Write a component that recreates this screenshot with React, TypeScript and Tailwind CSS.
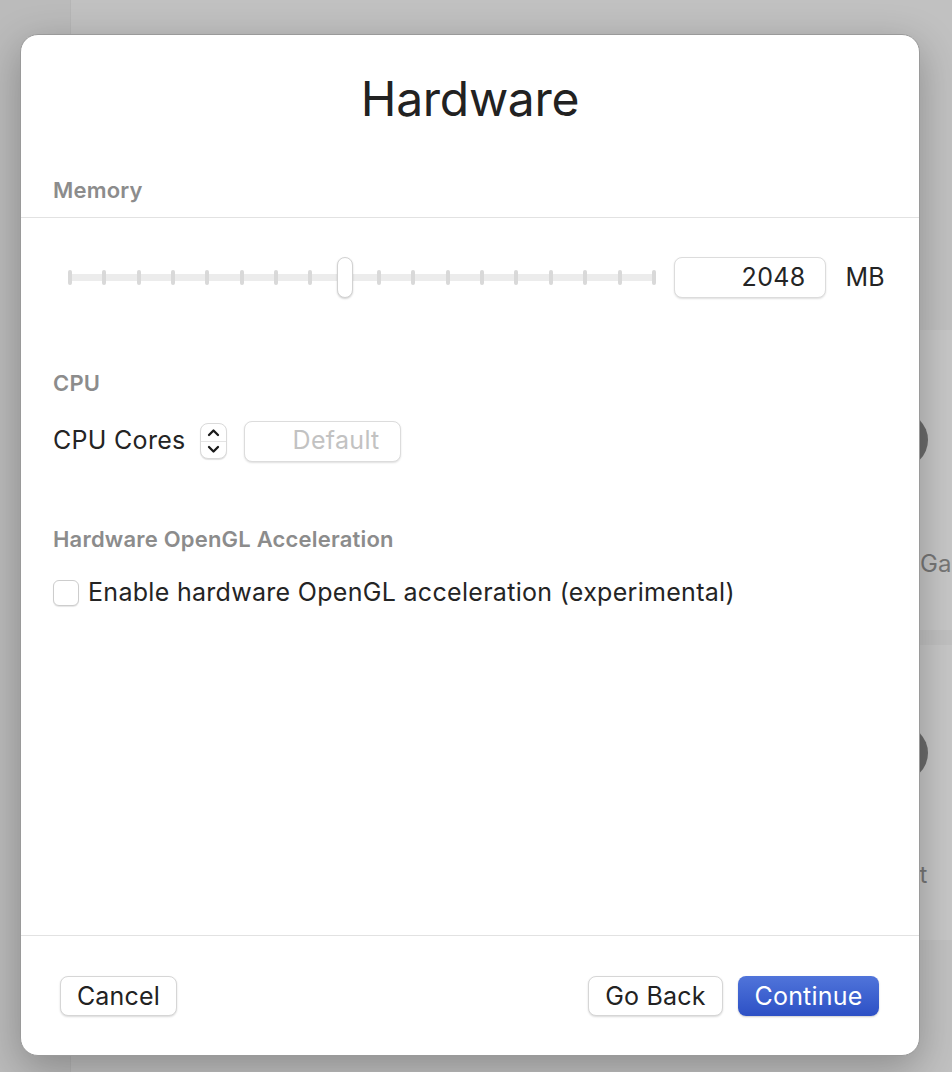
import React from 'react';

const font = { fontFamily: 'Inter, "Liberation Sans", sans-serif' };

function SectionHeader({ children, border }: { children: React.ReactNode; border?: boolean }) {
  return (
    <div
      className={
        'px-[32px] text-[22px] leading-[24px] font-semibold tracking-[0.2px] text-[#8c8c8c] ' +
        (border ? 'pb-[15px] border-b border-[#e2e2e2]' : '')
      }
    >
      {children}
    </div>
  );
}

function Slider() {
  const ticks = Array.from({ length: 18 }, (_, i) => i);
  return (
    <div className="relative w-[588px] h-[41px] shrink-0">
      <div className="absolute left-0 right-0 top-[17px] h-[7px] rounded-full bg-[#ececec]" />
      <div className="absolute left-0 right-0 top-[13px] h-[15px] flex justify-between">
        {ticks.map((i) => (
          <div
            key={i}
            className={'w-[4px] h-[15px] rounded-full ' + (i === 8 ? 'bg-transparent' : 'bg-[#d9d9d9]')}
          />
        ))}
      </div>
      <div className="absolute left-[269px] top-0 w-[16px] h-[41px] rounded-full bg-white border border-[#d2d2d2] shadow-[0_1px_2px_rgba(0,0,0,0.18)]" />
    </div>
  );
}

function Stepper() {
  return (
    <div className="w-[27px] h-[36px] rounded-[8px] bg-white border border-[#dadada] shadow-[0_1px_1px_rgba(0,0,0,0.12)] flex flex-col">
      <div className="flex-1 flex items-center justify-center border-b border-[#e4e4e4]">
        <svg width="13" height="9" viewBox="0 0 13 9">
          <path d="M2 7 L6.5 2.5 L11 7" fill="none" stroke="#1a1a1a" strokeWidth="2.3" strokeLinecap="round" strokeLinejoin="round" />
        </svg>
      </div>
      <div className="flex-1 flex items-center justify-center">
        <svg width="13" height="9" viewBox="0 0 13 9">
          <path d="M2 2 L6.5 6.5 L11 2" fill="none" stroke="#1a1a1a" strokeWidth="2.3" strokeLinecap="round" strokeLinejoin="round" />
        </svg>
      </div>
    </div>
  );
}

function Button({ children, primary, w }: { children: React.ReactNode; primary?: boolean; w: string }) {
  return (
    <button
      className={
        'h-[40px] rounded-[8px] text-[25px] tracking-[0.2px] leading-none ' +
        w +
        ' ' +
        (primary
          ? 'text-white bg-gradient-to-b from-[#5074da] to-[#2d50c5] shadow-[0_1px_2px_rgba(0,0,0,0.2)]'
          : 'text-[#222] bg-white border border-[#d6d6d6] shadow-[0_1px_2px_rgba(0,0,0,0.15)]')
      }
    >
      {children}
    </button>
  );
}

export default function App() {
  return (
    <div className="relative w-[952px] h-[1072px] overflow-hidden flex bg-[#c1c1c1]" style={font}>
      {/* background window behind the sheet */}
      <div className="w-[71px] h-full bg-[#bbbbbb] border-r border-[#b6b6b6]" />
      <div className="flex-1 flex flex-col items-end pt-[330px] gap-[15px]">
        <div className="w-[340px] h-[300px] -mr-[60px] bg-[#c7c7c7] pl-[200px] pt-[82px]">
          <div className="w-[56px] h-[56px] rounded-full bg-[#6c6c6c]" />
          <div className="mt-[78px] ml-[48px] text-[24px] text-[#777] whitespace-nowrap">Garage</div>
        </div>
        <div className="w-[340px] h-[295px] -mr-[60px] bg-[#c7c7c7] pl-[200px] pt-[80px]">
          <div className="w-[56px] h-[56px] rounded-full bg-[#6c6c6c]" />
          <div className="mt-[76px] ml-[-11px] text-[24px] text-[#777] whitespace-nowrap">Robot</div>
        </div>
      </div>

      {/* sheet */}
      <div className="absolute left-[20px] top-[34px] w-[900px] h-[1022px] bg-white rounded-[18px] border border-[#9a9a9a] shadow-[0_12px_40px_rgba(0,0,0,0.28)] flex flex-col text-[#242424]">
        <h1 className="pt-[36px] text-center text-[48px] leading-[56px] font-normal tracking-[-0.3px] text-[#222]">
          Hardware
        </h1>

        <div className="mt-[51px]">
          <SectionHeader border>Memory</SectionHeader>
        </div>

        <div className="mt-[39px] flex items-center pl-[47px] pr-[34px]">
          <Slider />
          <div className="ml-[18px] w-[157px] h-[41px] rounded-[8px] bg-white border border-[#dcdcdc] shadow-[0_1px_2px_rgba(0,0,0,0.13)] flex items-center justify-end pr-[20px] text-[25px] tracking-[0.3px]">
            2048
          </div>
          <div className="ml-[19px] text-[25px] tracking-[0.3px]">MB</div>
        </div>

        <div className="mt-[73px]">
          <SectionHeader>CPU</SectionHeader>
        </div>

        <div className="mt-[25px] px-[32px] flex items-center h-[42px]">
          <span className="text-[25px] tracking-[0.3px]">CPU Cores</span>
          <div className="ml-[14px]">
            <Stepper />
          </div>
          <div className="ml-[17px] w-[157px] h-[41px] rounded-[8px] bg-white border border-[#dcdcdc] shadow-[0_1px_2px_rgba(0,0,0,0.13)] flex items-center justify-end pr-[20px] text-[25px] tracking-[0.3px] text-[#c2c2c2]">
            Default
          </div>
        </div>

        <div className="mt-[65px]">
          <SectionHeader>Hardware OpenGL Acceleration</SectionHeader>
        </div>

        <label className="mt-[29px] px-[32px] flex items-center h-[26px]">
          <span className="w-[26px] h-[26px] rounded-[6px] bg-white border border-[#cdcdcd] shadow-[0_1px_1px_rgba(0,0,0,0.1)]" />
          <span className="ml-[9px] text-[25px] tracking-[0.3px]">Enable hardware OpenGL acceleration (experimental)</span>
        </label>

        <div className="flex-1" />

        <div className="border-t border-[#e2e2e2] pt-[40px] pb-[39px] pl-[39px] pr-[40px] flex items-center">
          <Button w="w-[117px]">Cancel</Button>
          <div className="flex-1" />
          <Button w="w-[135px]">Go Back</Button>
          <div className="ml-[15px]">
            <Button primary w="w-[141px]">Continue</Button>
          </div>
        </div>
      </div>
    </div>
  );
}
